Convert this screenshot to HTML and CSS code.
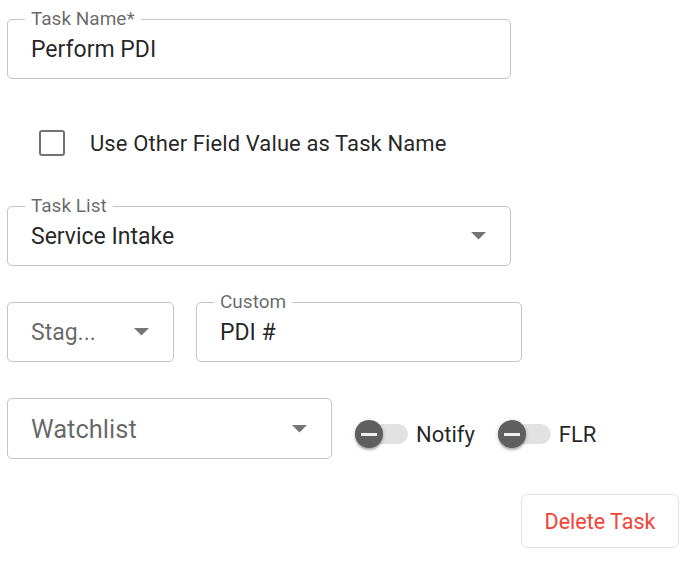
FILE: index.html
```html
<!DOCTYPE html>
<html lang="en">
<head>
  <meta charset="UTF-8" />
  <meta name="viewport" content="width=device-width, initial-scale=1.0"/>
  <title>Task</title>
  <link rel="stylesheet" href="styles.css">
</head>
<body>

  <form class="task-form">
    <div class="field field-wide">
      <span class="field-label">Task Name*</span>
      <span class="field-value">Perform PDI</span>
    </div>

    <label class="check-row">
      <span class="checkbox"></span>
      <span>Use Other Field Value as Task Name</span>
    </label>

    <div class="field field-wide field-select">
      <span class="field-label">Task List</span>
      <span class="field-value">Service Intake</span>
      <svg class="caret" width="15" height="8" viewBox="0 0 15 8"><polygon points="0,0 15,0 7.5,7.5" /></svg>
    </div>

    <div class="row">
      <div class="field field-stage field-select">
        <span class="field-value placeholder">Stag...</span>
        <svg class="caret" width="15" height="8" viewBox="0 0 15 8"><polygon points="0,0 15,0 7.5,7.5" /></svg>
      </div>
      <div class="field field-custom">
        <span class="field-label">Custom</span>
        <span class="field-value">PDI #</span>
      </div>
    </div>

    <div class="row row-watch">
      <div class="field field-watch field-select">
        <span class="field-value placeholder big">Watchlist</span>
        <svg class="caret" width="15" height="8" viewBox="0 0 15 8"><polygon points="0,0 15,0 7.5,7.5" /></svg>
      </div>

      <div class="toggles">
        <label class="toggle">
          <span class="switch"><span class="track"></span><span class="thumb"></span></span>
          <span>Notify</span>
        </label>
        <label class="toggle">
          <span class="switch"><span class="track"></span><span class="thumb"></span></span>
          <span>FLR</span>
        </label>
      </div>
    </div>

    <button type="button" class="delete-btn">Delete Task</button>
  </form>

</body>
</html>
```

FILE: styles.css
```css
body {
  margin: 0;
  font-family: Roboto, 'Liberation Sans', sans-serif;
  background-color: #fff;
  color: rgba(0, 0, 0, 0.87);
}

.task-form {
  display: flex;
  flex-direction: column;
  padding: 19px 9px 0 7px;
}

.field {
  position: relative;
  box-sizing: border-box;
  height: 60px;
  display: flex;
  align-items: center;
  padding: 0 24px 0 23px;
  border: 1px solid #c4c4c4;
  border-radius: 5px;
}

.field-wide {
  width: 504px;
}

.field-label {
  position: absolute;
  top: -12px;
  left: 17px;
  padding: 0 6px;
  background: #fff;
  font-size: 19px;
  line-height: 22px;
  color: rgba(0, 0, 0, 0.6);
}

.field-value {
  font-size: 23px;
}

.placeholder {
  color: rgba(0, 0, 0, 0.6);
}

.placeholder.big {
  font-size: 25.5px;
}

.field-select {
  justify-content: space-between;
}

.caret {
  fill: #757575;
}

.check-row {
  display: flex;
  align-items: center;
  gap: 25px;
  margin-top: 51px;
  padding-left: 32px;
  font-size: 22px;
  letter-spacing: 0.1px;
}

.checkbox {
  box-sizing: border-box;
  width: 26px;
  height: 26px;
  border: 2.6px solid #737373;
  border-radius: 3px;
}

.field-select.field-wide {
  margin-top: 50px;
}

.row {
  display: flex;
  align-items: center;
  gap: 22px;
  margin-top: 36px;
}

.field-stage {
  width: 167px;
}

.field-custom {
  width: 326px;
}

.row-watch {
  gap: 23px;
}

.field-watch {
  width: 325px;
  height: 61px;
}

.toggles {
  display: flex;
  align-items: center;
  gap: 23px;
  padding-top: 11px;
}

.toggle {
  display: flex;
  align-items: center;
  gap: 8px;
  font-size: 22px;
}

.switch {
  position: relative;
  display: flex;
  align-items: center;
  width: 53px;
  height: 30px;
}

.track {
  margin-left: 5px;
  width: 48px;
  height: 20px;
  border-radius: 10px;
  background: #e2e2e2;
}

.thumb {
  position: absolute;
  left: 0;
  top: 1px;
  width: 28px;
  height: 28px;
  border-radius: 50%;
  background: #5f5f5f;
  box-shadow: 0 2px 2px rgba(0, 0, 0, 0.25), 0 1px 5px rgba(0, 0, 0, 0.15);
}

.thumb::after {
  content: "";
  position: absolute;
  left: 6px;
  top: 12.5px;
  width: 16px;
  height: 3px;
  background: #eee;
}

.delete-btn {
  align-self: flex-end;
  margin-top: 35px;
  width: 158px;
  height: 54px;
  background: #fff;
  border: 1px solid #e3e3e3;
  border-radius: 6px;
  font-family: Roboto, 'Liberation Sans', sans-serif;
  font-size: 21.5px;
  color: #f44336;
  cursor: pointer;
}
```
